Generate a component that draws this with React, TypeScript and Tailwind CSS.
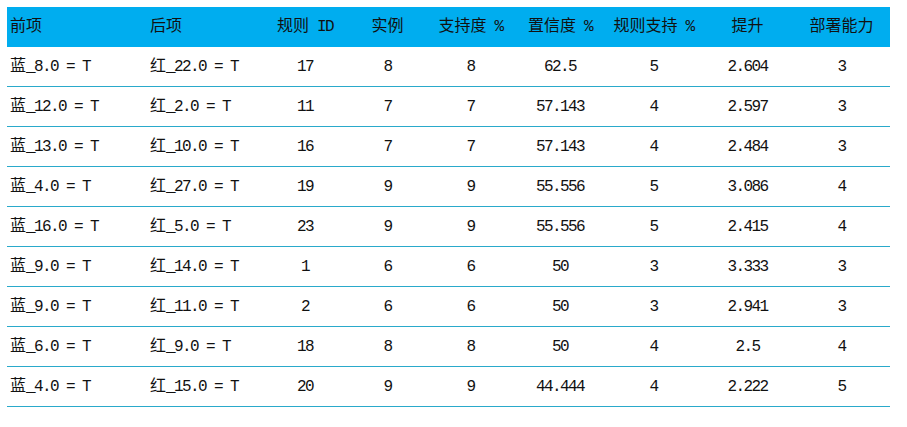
import React from 'react';

const headers = ['前项', '后项', '规则 ID', '实例', '支持度 %', '置信度 %', '规则支持 %', '提升', '部署能力'];

const rows = [
  ['蓝_8.0 = T', '红_22.0 = T', '17', '8', '8', '62.5', '5', '2.604', '3'],
  ['蓝_12.0 = T', '红_2.0 = T', '11', '7', '7', '57.143', '4', '2.597', '3'],
  ['蓝_13.0 = T', '红_10.0 = T', '16', '7', '7', '57.143', '4', '2.484', '3'],
  ['蓝_4.0 = T', '红_27.0 = T', '19', '9', '9', '55.556', '5', '3.086', '4'],
  ['蓝_16.0 = T', '红_5.0 = T', '23', '9', '9', '55.556', '5', '2.415', '4'],
  ['蓝_9.0 = T', '红_14.0 = T', '1', '6', '6', '50', '3', '3.333', '3'],
  ['蓝_9.0 = T', '红_11.0 = T', '2', '6', '6', '50', '3', '2.941', '3'],
  ['蓝_6.0 = T', '红_9.0 = T', '18', '8', '8', '50', '4', '2.5', '4'],
  ['蓝_4.0 = T', '红_15.0 = T', '20', '9', '9', '44.444', '4', '2.222', '5'],
];

const cols = 'grid grid-cols-[140px_114px_88px_77px_89px_90px_97px_91px_97px]';

// half-width runs get squeezed so that latin chars take half a CJK cell
const Txt: React.FC<{ s: string }> = ({ s }) => (
  <>
    {s.split(/([\u4e00-\u9fff]+)/).filter(Boolean).map((part, i) =>
      /[\u4e00-\u9fff]/.test(part) ? (
        <span key={i}>{part}</span>
      ) : (
        <span key={i} className="tracking-[-1.6px]" style={{ whiteSpace: 'pre' }}>{part}</span>
      )
    )}
  </>
);

const App: React.FC = () => {
  return (
    <div className="w-[907px] h-[427px] bg-white pt-[7px] pl-[7px] overflow-hidden">
      <div
        className="w-[883px] text-base text-[#111]"
        style={{ fontFamily: '"Liberation Mono", "Noto Sans CJK SC", monospace' }}
      >
        {/* Header */}
        <div className={`${cols} h-10 items-center bg-[#00adef]`}>
          {headers.map((h, i) => (
            <div key={h} className={i < 2 ? 'pl-[3px] whitespace-nowrap' : 'text-center whitespace-nowrap'}>
              <Txt s={h} />
            </div>
          ))}
        </div>

        {/* Rows */}
        {rows.map((r, ri) => (
          <div key={ri} className={`${cols} h-10 items-center border-b border-[#2aaacb]`}>
            {r.map((c, i) => (
              <div key={i} className={i < 2 ? 'pl-[3px] whitespace-nowrap' : 'text-center whitespace-nowrap'}>
                <Txt s={c} />
              </div>
            ))}
          </div>
        ))}
      </div>
    </div>
  );
};

export default App;
